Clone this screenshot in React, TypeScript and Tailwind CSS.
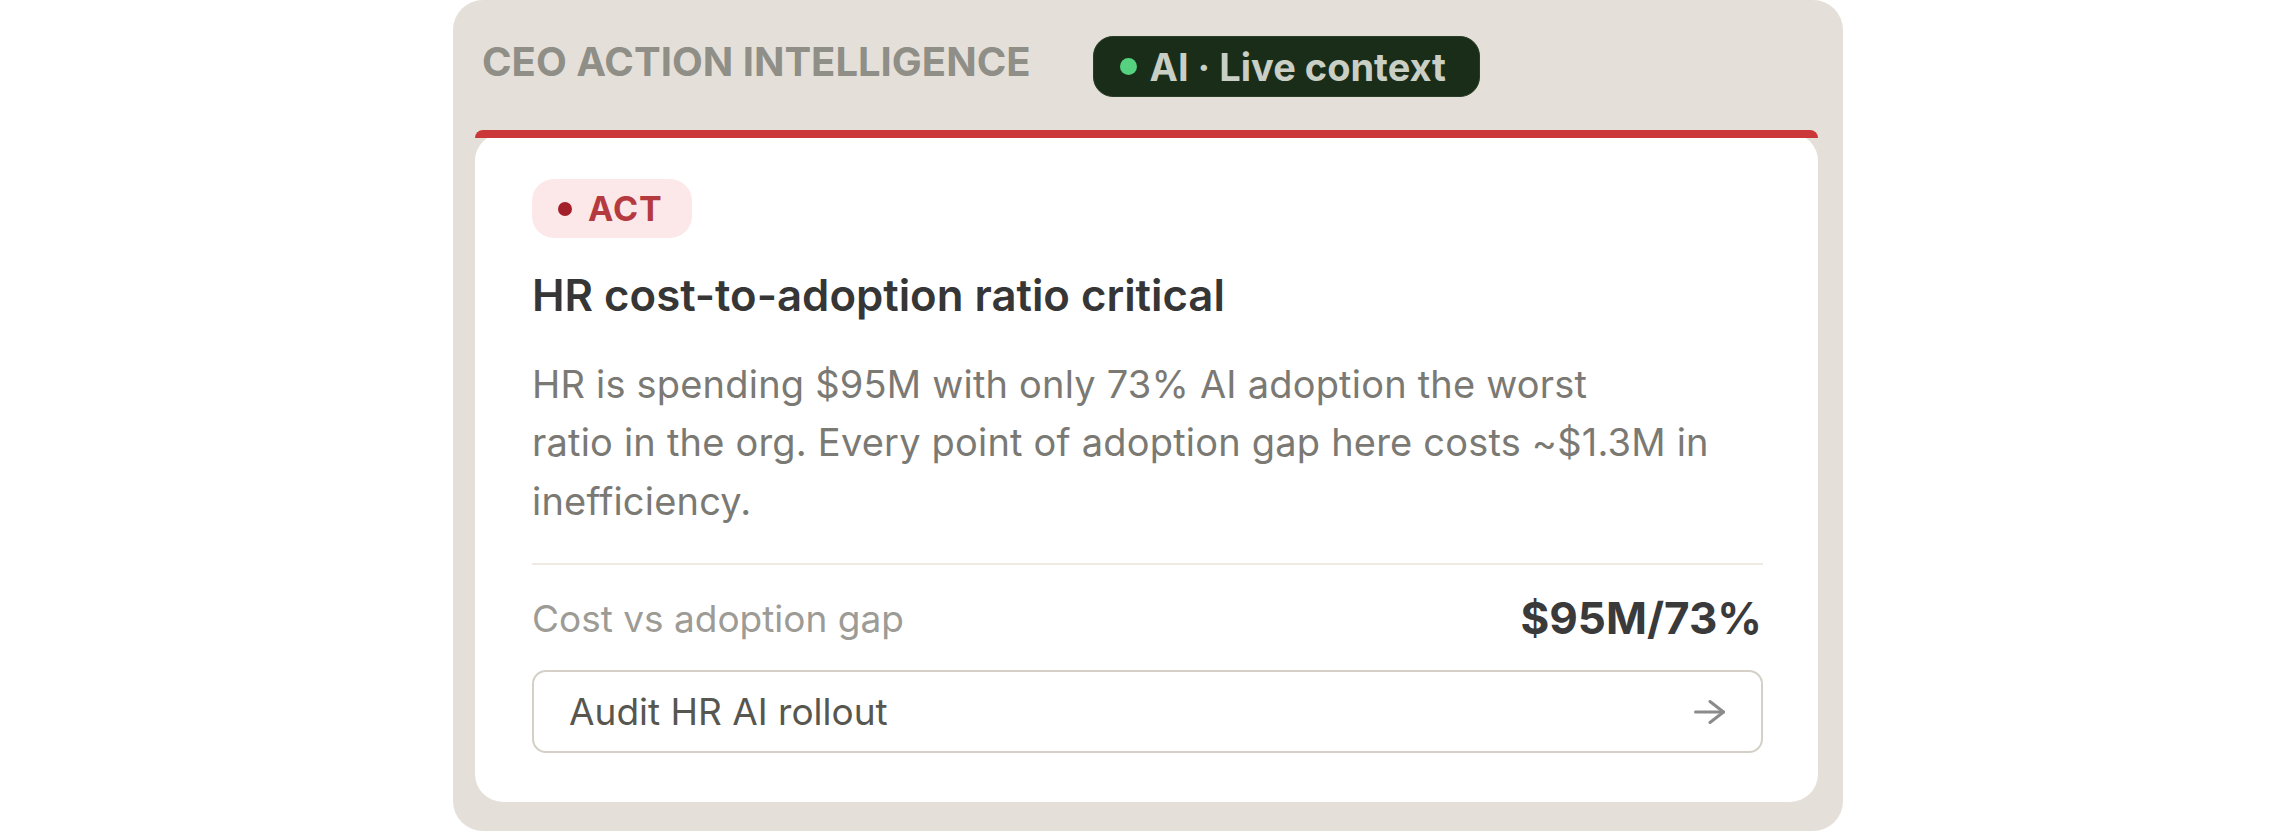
export default function App() {
  return (
    <div className="flex min-h-screen w-full justify-center bg-white font-['Inter',sans-serif]">
      <div className="w-[1390px] rounded-[30px] bg-[#e4e0d9] pt-[36px] pb-[28px] pl-[22px] pr-[25px]">
        <div className="flex items-start pl-[7px]">
          <h2 className="mt-[1.5px] text-[40px] font-bold leading-[48px] text-[#8f8e87]">
            CEO ACTION INTELLIGENCE
          </h2>
          <div className="ml-[62px] flex h-[61px] items-center gap-[13px] rounded-[20px] border border-[#2b3d29] bg-[#1a2d19] pl-[26px] pr-[33px]">
            <span className="h-[17px] w-[17px] rounded-full bg-[#55d17f]" />
            <span className="text-[38px] font-bold leading-none text-[#c9cfc5]">AI · Live context</span>
          </div>
        </div>
        <div className="mt-[33px] flex flex-col">
          <div className="relative z-10 h-[8px] rounded-t-[8px] bg-[#cb3639]" />
          <div className="-mt-[5px] rounded-[28px] bg-white pt-[46px] pb-[49px] pl-[57px] pr-[55px]">
            <div className="flex h-[59px] w-fit items-center gap-[16px] rounded-[22px] bg-[#fce8e8] pl-[26px] pr-[29px]">
              <span className="h-[14px] w-[14px] rounded-full bg-[#a3202a]" />
              <span className="text-[34px] font-bold leading-none tracking-[1px] text-[#b43a3f]">ACT</span>
            </div>
            <h3 className="mt-[32px] text-[43.7px] font-semibold leading-[52px] text-[#363636]">
              HR cost-to-adoption ratio critical
            </h3>
            <p className="mt-[32.5px] whitespace-nowrap text-[38px] leading-[58.6px] tracking-[0.2px] text-[#7b7974]">
              HR is spending $95M with only 73% AI adoption the worst
              <br />
              ratio in the org. Every point of adoption gap here costs ~$1.3M in
              <br />
              inefficiency.
            </p>
            <div className="mt-[33px] h-[2px] bg-[#eeebe5]" />
            <div className="mt-[28px] flex h-[50px] items-center justify-between">
              <span className="text-[37px] text-[#9d9b95]">Cost vs adoption gap</span>
              <span className="pr-[1px] text-[44px] font-bold leading-[50px] text-[#3a3a3a]">$95M/73%</span>
            </div>
            <button className="mt-[27px] flex h-[83px] w-full items-center justify-between rounded-[14px] border-2 border-[#d4d0c8] bg-white pl-[35px] pr-[36px]">
              <span className="text-[37px] text-[#57564f]">Audit HR AI rollout</span>
              <svg width="31" height="24" viewBox="0 0 31 24" fill="none" stroke="#8b8b8b" strokeWidth="3" strokeLinecap="round" strokeLinejoin="round">
                <path d="M1.5 12H29.5" />
                <path d="M16 1.5L29.5 12L16 22.5" />
              </svg>
            </button>
          </div>
        </div>
      </div>
    </div>
  );
}
